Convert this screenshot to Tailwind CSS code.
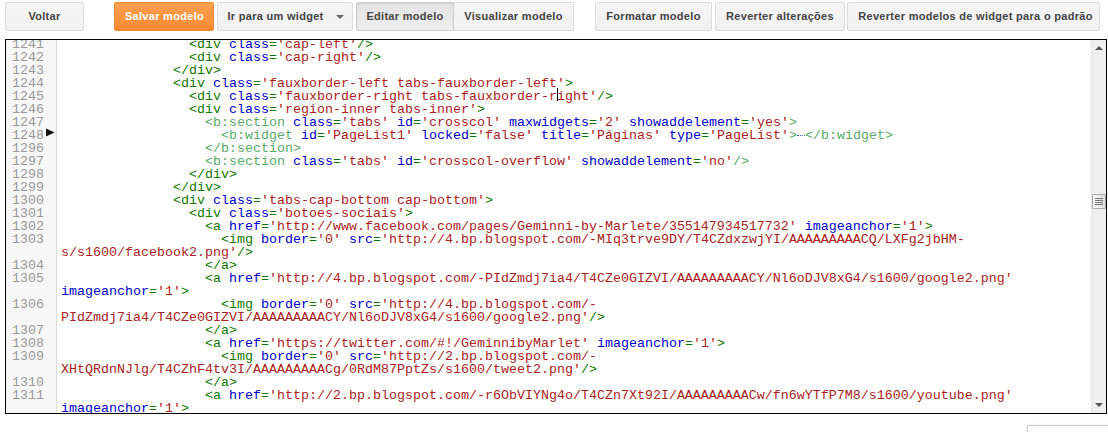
<!DOCTYPE html>
<html><head><meta charset="utf-8">
<script src="https://cdn.jsdelivr.net/npm/@tailwindcss/browser@4"></script>
</head>
<body class="relative w-[1108px] h-[432px] overflow-hidden bg-white">
<div class="flex items-start pt-[2px] pl-[5px] h-[39px] font-['Liberation_Sans',Arial,sans-serif] text-[11px] tracking-[0.3px] font-bold text-[#444]">
  <div class="w-[79px] h-[29px] flex items-center justify-center rounded-[2px] border border-[#dcdcdc] bg-gradient-to-b from-[#f5f5f5] to-[#f1f1f1]">Voltar</div>
  <div class="ml-[30px] w-[100px] h-[29px] flex items-center justify-center pl-[1px] rounded-[2px] border border-[#f08a30] bg-gradient-to-b from-[#ffa04f] to-[#f98a33] text-white">Salvar modelo</div>
  <div class="ml-[3px] w-[136px] h-[29px] flex items-center justify-center gap-[12px] pl-[1px] rounded-[2px] border border-[#dcdcdc] bg-gradient-to-b from-[#f5f5f5] to-[#f1f1f1]"><span>Ir para um widget</span><span class="w-0 h-0 border-x-[4px] border-x-transparent border-t-[4px] border-t-[#666] mt-px"></span></div>
  <div class="ml-[3px] w-[98px] h-[29px] flex items-center justify-center rounded-l-[2px] border border-[#d0d0d0] bg-gradient-to-b from-[#e4e4e4] to-[#eeeeee] shadow-[inset_0_1px_2px_rgba(0,0,0,0.1)]">Editar modelo</div>
  <div class="w-[120px] h-[29px] flex items-center justify-center rounded-r-[2px] border border-l-0 border-[#dcdcdc] bg-gradient-to-b from-[#f5f5f5] to-[#f1f1f1]">Visualizar modelo</div>
  <div class="ml-[21px] w-[117px] h-[29px] flex items-center justify-center rounded-[2px] border border-[#dcdcdc] bg-gradient-to-b from-[#f5f5f5] to-[#f1f1f1]">Formatar modelo</div>
  <div class="ml-[3px] w-[130px] h-[29px] flex items-center justify-center rounded-[2px] border border-[#dcdcdc] bg-gradient-to-b from-[#f5f5f5] to-[#f1f1f1]">Reverter alterações</div>
  <div class="ml-[2px] w-[253px] h-[29px] flex items-center justify-center pl-[4px] rounded-[2px] border border-[#dcdcdc] bg-gradient-to-b from-[#f5f5f5] to-[#f1f1f1]">Reverter modelos de widget para o padrão</div>
</div>

<div class="relative ml-[5px] w-[1102px] h-[375px] border border-black flex overflow-hidden bg-white">
  <div class="flex-1 relative overflow-hidden bg-[linear-gradient(to_right,#f7f7f7_50px,#dddddd_50px,#dddddd_51px,#ffffff_51px)]">
    <div class="mt-[-2px] font-['Liberation_Mono','Courier_New',monospace] text-[13.33px] leading-[13px] text-[#117700] [&>div]:flex [&>div]:h-[13px] [&>div>b]:w-[55px] [&>div>b]:shrink-0 [&>div>b]:pl-[6px] [&>div>b]:font-normal [&>div>b]:text-[#999] [&>div>p]:whitespace-pre [&_u]:no-underline [&_u]:text-[#0000cc] [&_s]:no-underline [&_s]:text-[#aa2222] [&_em]:not-italic [&_em]:text-[#5aaa6a]">
      <div><b>1241</b><p>                <span>&lt;div</span> <u>class</u>=<s>'cap-left'</s>/&gt;</p></div>
      <div><b>1242</b><p>                <span>&lt;div</span> <u>class</u>=<s>'cap-right'</s>/&gt;</p></div>
      <div><b>1243</b><p>              &lt;/div&gt;</p></div>
      <div><b>1244</b><p>              &lt;div <u>class</u>=<s>'fauxborder-left tabs-fauxborder-left'</s>&gt;</p></div>
      <div><b>1245</b><p>                &lt;div <u>class</u>=<s>'fauxborder-right tabs-fauxborder-right'</s>/&gt;</p></div>
      <div><b>1246</b><p>                &lt;div <u>class</u>=<s>'region-inner tabs-inner'</s>&gt;</p></div>
      <div><b>1247</b><p>                  <em>&lt;b:section</em> <u>class</u>=<s>'tabs'</s> <u>id</u>=<s>'crosscol'</s> <u>maxwidgets</u>=<s>'2'</s> <u>showaddelement</u>=<s>'yes'</s><em>&gt;</em></p></div>
      <div><b>1248</b><p>                    <em>&lt;b:widget</em> <u>id</u>=<s>'PageList1'</s> <u>locked</u>=<s>'false'</s> <u>title</u>=<s>'Páginas'</s> <u>type</u>=<s>'PageList'</s><em>&gt;</em><span class="inline-block w-[8px] align-middle border-t border-dotted border-[#3a7bc8]"></span><em>&lt;/b:widget&gt;</em></p></div>
      <div><b>1296</b><p>                  <em>&lt;/b:section&gt;</em></p></div>
      <div><b>1297</b><p>                  <em>&lt;b:section</em> <u>class</u>=<s>'tabs'</s> <u>id</u>=<s>'crosscol-overflow'</s> <u>showaddelement</u>=<s>'no'</s><em>/&gt;</em></p></div>
      <div><b>1298</b><p>                &lt;/div&gt;</p></div>
      <div><b>1299</b><p>              &lt;/div&gt;</p></div>
      <div><b>1300</b><p>              &lt;div <u>class</u>=<s>'tabs-cap-bottom cap-bottom'</s>&gt;</p></div>
      <div><b>1301</b><p>                &lt;div <u>class</u>=<s>'botoes-sociais'</s>&gt;</p></div>
      <div><b>1302</b><p>                  &lt;a <u>href</u>=<s>'http://www.facebook.com/pages/Geminni-by-Marlete/355147934517732'</s> <u>imageanchor</u>=<s>'1'</s>&gt;</p></div>
      <div><b>1303</b><p>                    &lt;img <u>border</u>=<s>'0'</s> <u>src</u>=<s>'http://4.bp.blogspot.com/-MIq3trve9DY/T4CZdxzwjYI/AAAAAAAAACQ/LXFg2jbHM-</s></p></div>
      <div><b></b><p><s>s/s1600/facebook2.png'</s>/&gt;</p></div>
      <div><b>1304</b><p>                  &lt;/a&gt;</p></div>
      <div><b>1305</b><p>                  &lt;a <u>href</u>=<s>'http://4.bp.blogspot.com/-PIdZmdj7ia4/T4CZe0GIZVI/AAAAAAAAACY/Nl6oDJV8xG4/s1600/google2.png'</s></p></div>
      <div><b></b><p><u>imageanchor</u>=<s>'1'</s>&gt;</p></div>
      <div><b>1306</b><p>                    &lt;img <u>border</u>=<s>'0'</s> <u>src</u>=<s>'http://4.bp.blogspot.com/-</s></p></div>
      <div><b></b><p><s>PIdZmdj7ia4/T4CZe0GIZVI/AAAAAAAAACY/Nl6oDJV8xG4/s1600/google2.png'</s>/&gt;</p></div>
      <div><b>1307</b><p>                  &lt;/a&gt;</p></div>
      <div><b>1308</b><p>                  &lt;a <u>href</u>=<s>'https://twitter.com/#!/GeminnibyMarlet'</s> <u>imageanchor</u>=<s>'1'</s>&gt;</p></div>
      <div><b>1309</b><p>                    &lt;img <u>border</u>=<s>'0'</s> <u>src</u>=<s>'http://2.bp.blogspot.com/-</s></p></div>
      <div><b></b><p><s>XHtQRdnNJlg/T4CZhF4tv3I/AAAAAAAAACg/0RdM87PptZs/s1600/tweet2.png'</s>/&gt;</p></div>
      <div><b>1310</b><p>                  &lt;/a&gt;</p></div>
      <div><b>1311</b><p>                  &lt;a <u>href</u>=<s>'http://2.bp.blogspot.com/-r6ObVIYNg4o/T4CZn7Xt92I/AAAAAAAAACw/fn6wYTfP7M8/s1600/youtube.png'</s></p></div>
      <div><b></b><p><u>imageanchor</u>=<s>'1'</s>&gt;</p></div>
    </div>
    <svg class="absolute left-[40px] top-[88px]" width="9" height="9" viewBox="0 0 9 9"><path d="M0 0.5 L8.5 4.5 L0 8.5Z" fill="#111"/></svg>
    <div class="absolute left-[551px] top-[48px] w-px h-[13px] bg-black"></div>
  </div>
  <div class="w-[15px] shrink-0 h-full bg-[#efefef] border-l border-[#e6e6e6] flex flex-col items-center">
    <div class="mt-[6px] w-0 h-0 border-x-[4px] border-x-transparent border-b-[4px] border-b-[#555]"></div>
    <div class="mt-[144px] w-[14px] h-[15px] rounded-[1px] border border-[#a8a8a8] bg-gradient-to-r from-[#fafafa] to-[#dcdcdc] flex flex-col items-center justify-center gap-px">
      <span class="w-[8px] h-px bg-[#777]"></span><span class="w-[8px] h-px bg-[#777]"></span><span class="w-[8px] h-px bg-[#777]"></span><span class="w-[8px] h-px bg-[#777]"></span>
    </div>
    <div class="mt-auto mb-[6px] w-0 h-0 border-x-[4px] border-x-transparent border-t-[4px] border-t-[#555]"></div>
  </div>
</div>
<div class="absolute left-[1027px] top-[425px] w-[90px] h-[20px] rounded-tl-[2px] border border-[#cccccc] bg-white shadow-[0_0_2px_rgba(0,0,0,0.15)]"></div>
</body></html>
